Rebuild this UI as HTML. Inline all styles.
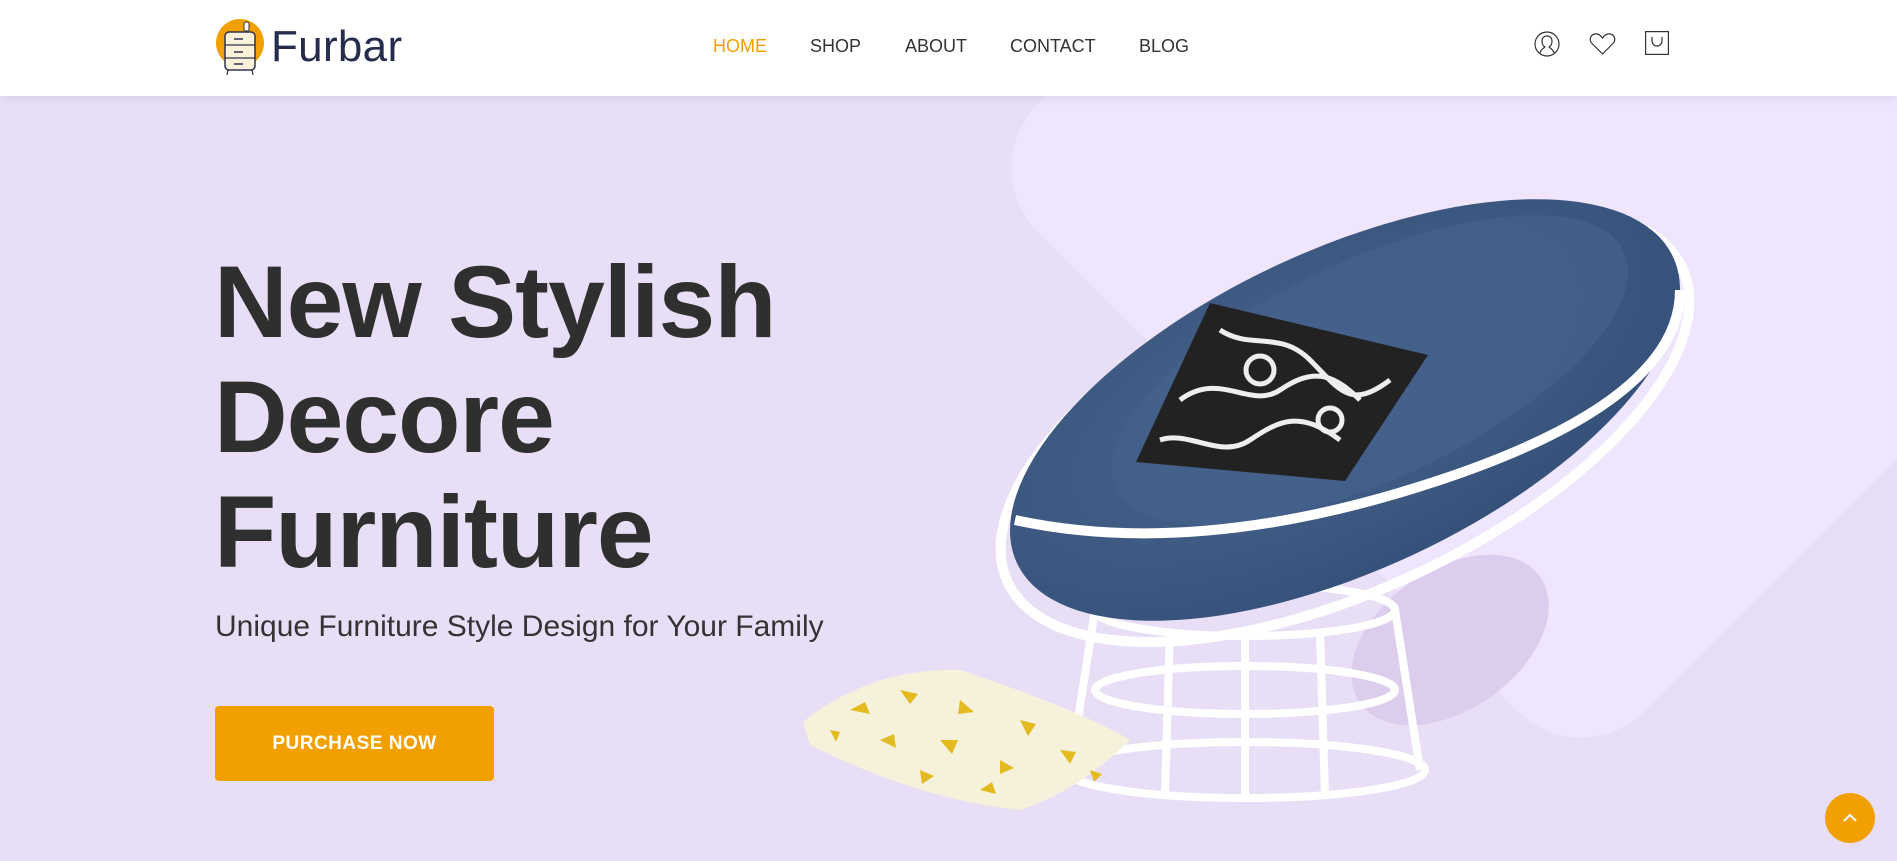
<!DOCTYPE html>
<html><head><meta charset="utf-8"><style>
*{margin:0;padding:0;box-sizing:border-box}
body{width:1897px;height:861px;overflow:hidden;background:#e8dff7;font-family:"Liberation Sans",Arial,sans-serif;position:relative}
.diamond{position:absolute;left:1152px;top:-261px;width:858px;height:858px;background:#efe5fd;border-radius:90px;transform:rotate(45deg)}
header{position:absolute;left:0;top:0;width:1897px;height:96px;background:#fff;box-shadow:0 2px 10px rgba(0,0,0,.08);z-index:5}
.logo{position:absolute;left:215px;top:18px}
.logotext{position:absolute;left:271px;top:22px;font-size:44px;color:#262c4e;letter-spacing:0.3px}
nav a{position:absolute;top:36px;font-size:18px;color:#333;text-decoration:none}
.icons svg{position:absolute;top:31px}
h1{position:absolute;left:214px;top:245px;font-size:102px;line-height:115px;font-weight:bold;color:#2f2f2f;letter-spacing:-1px}
.sub{position:absolute;left:215px;top:610px;font-size:30px;color:#333}
.btn{position:absolute;left:215px;top:706px;width:279px;height:75px;background:#f2a000;border-radius:4px;color:#fff;font-size:19px;font-weight:bold;text-align:center;line-height:75px;letter-spacing:.5px}
.top{position:absolute;left:1825px;top:793px;width:50px;height:50px;border-radius:50%;background:#f2a000}
</style></head><body>
<div class="diamond"></div>
<header>
<svg class="logo" width="52" height="60" viewBox="0 0 52 60">
<circle cx="25" cy="25" r="24" fill="#f2a000"/>
<rect x="29" y="4" width="5" height="9" rx="2" fill="#fff" stroke="#333" stroke-width="1"/>
<rect x="10" y="14" width="30" height="38" rx="4" fill="#fbf2d9" stroke="#2e3350" stroke-width="1.5"/>
<line x1="10" y1="27" x2="40" y2="27" stroke="#2e3350" stroke-width="1.2"/>
<line x1="10" y1="40" x2="40" y2="40" stroke="#2e3350" stroke-width="1.2"/>
<line x1="19" y1="21" x2="28" y2="21" stroke="#2e3350" stroke-width="1.5"/>
<line x1="19" y1="34" x2="28" y2="34" stroke="#2e3350" stroke-width="1.5"/>
<line x1="19" y1="46" x2="28" y2="46" stroke="#2e3350" stroke-width="1.5"/>
<line x1="13" y1="52" x2="12" y2="57" stroke="#2e3350" stroke-width="1.2"/>
<line x1="37" y1="52" x2="38" y2="57" stroke="#2e3350" stroke-width="1.2"/>
</svg>
<div class="logotext">Furbar</div>
<nav>
<a style="left:713px;color:#f2a000">HOME</a>
<a style="left:810px">SHOP</a>
<a style="left:905px">ABOUT</a>
<a style="left:1010px">CONTACT</a>
<a style="left:1139px">BLOG</a>
</nav>
<div class="icons">
<svg style="left:1534px" width="26" height="26" viewBox="0 0 26 26" fill="none" stroke="#333" stroke-width="1.2"><circle cx="13" cy="13" r="12"/><path d="M6 22c1-4 4-5 5-6c-2-1-3-3-3-6c0-3 2-5 5-5s5 2 5 5c0 3-1 5-3 6c1 1 4 2 5 6"/></svg>
<svg style="left:1589px;top:32px" width="27" height="24" viewBox="0 0 27 24" fill="none" stroke="#333" stroke-width="1.2"><path d="M13.5 22L3 11.5C0 8.5 1 3 5.5 2c3-.6 6 1 8 4c2-3 5-4.6 8-4c4.5 1 5.5 6.5 2.5 9.5z"/></svg>
<svg style="left:1645px" width="24" height="24" viewBox="0 0 24 24" fill="none" stroke="#333" stroke-width="1.2"><rect x="0.6" y="0.6" width="22.8" height="22.8"/><path d="M7 6v4a5 5 0 0 0 10 0V6"/></svg>
</div>
</header>

<svg style="position:absolute;left:0;top:0" width="1897" height="861">
<defs>
<radialGradient id="bl" cx="45%" cy="40%" r="65%"><stop offset="0" stop-color="#4a6790"/><stop offset="1" stop-color="#355078"/></radialGradient>
</defs>
<ellipse cx="1450" cy="640" rx="110" ry="70" fill="#dccdec" transform="rotate(-35 1450 640)"/>
<g fill="none" stroke="#fff" stroke-width="8">
<ellipse cx="1245" cy="770" rx="180" ry="28"/>
<ellipse cx="1245" cy="690" rx="150" ry="24"/>
<ellipse cx="1245" cy="610" rx="150" ry="26"/>
<line x1="1095" y1="610" x2="1070" y2="770"/>
<line x1="1395" y1="610" x2="1420" y2="770"/>
<line x1="1170" y1="630" x2="1165" y2="795"/>
<line x1="1320" y1="630" x2="1325" y2="795"/>
<line x1="1245" y1="635" x2="1245" y2="800"/>
</g>
<ellipse cx="1345" cy="425" rx="372" ry="165" fill="none" stroke="#fff" stroke-width="10" transform="rotate(-25 1345 425)"/>
<ellipse cx="1345" cy="410" rx="362" ry="160" fill="url(#bl)" transform="rotate(-25 1345 410)"/>
<ellipse cx="1370" cy="370" rx="280" ry="110" fill="#44628c" transform="rotate(-25 1370 370)" opacity=".8"/>
<path d="M1015 520Q1200 560 1440 480T1680 290" fill="none" stroke="#fff" stroke-width="10"/>
<path d="M1210 303L1428 355L1345 481L1136 462Z" fill="#222"/>
<g fill="none" stroke="#eee" stroke-width="5">
<path d="M1220 330c30 20 60 0 90 30s40 50 80 20"/><path d="M1180 400c40-30 70 10 100-10s50-20 80 10"/><path d="M1160 440c30-10 60 20 90 0s50-30 90 0"/><circle cx="1260" cy="370" r="14"/><circle cx="1330" cy="420" r="12"/>
</g>
<path d="M803 722Q870 668 960 670Q1080 710 1130 740Q1080 790 1020 810Q920 800 810 745Z" fill="#f6f1da"/>
<g fill="#e3bb20">
<path d="M850 710l15-8 5 12z"/><path d="M900 690l18 4-8 10z"/><path d="M960 700l14 12-16 2z"/><path d="M1020 720l16 4-8 12z"/><path d="M880 740l14-6 2 14z"/><path d="M940 740l18 0-6 14z"/><path d="M1000 760l14 8-14 6z"/><path d="M1060 750l16 2-6 12z"/><path d="M920 770l14 6-12 8z"/><path d="M980 790l12-8 4 12z"/><path d="M830 730l10 2-4 10z"/><path d="M1090 770l12 4-8 8z"/>
</g>
</svg>

<h1>New Stylish<br>Decore<br>Furniture</h1>
<div class="sub">Unique Furniture Style Design for Your Family</div>
<div class="btn">PURCHASE NOW</div>
<div class="top"><svg width="50" height="50" viewBox="0 0 50 50"><path d="M19 28l6-6 6 6" fill="none" stroke="#fff" stroke-width="2"/></svg></div>
</body></html>
